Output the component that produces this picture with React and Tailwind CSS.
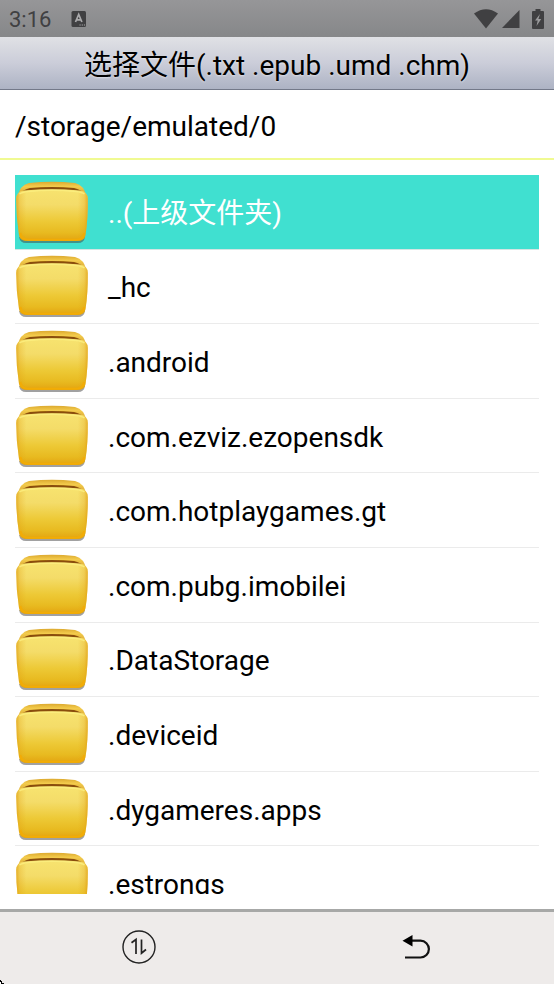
const FILES = [
  "..(上级文件夹)",
  "_hc",
  ".android",
  ".com.ezviz.ezopensdk",
  ".com.hotplaygames.gt",
  ".com.pubg.imobilei",
  ".DataStorage",
  ".deviceid",
  ".dygameres.apps",
  ".estrongs",
]

const FRONT = "M1.2 20 Q1.500 12.500 9 11.600 Q37 9 65 11.600 Q72.500 12.500 72.800 20 Q73 40 70.500 56 Q69.800 62 62 62 H12.500 Q4.800 62 4 56 Q1.200 38 1.200 20 Z"

function FolderIcon() {
  return (
    <svg className="w-[74px] h-[66px] shrink-0" viewBox="0 0 74 66" aria-hidden="true">
      <path d="M4 58 Q5 64 11 64 H63 Q69 64 70 58 Z" fill="#444" opacity=".5" filter="url(#folderBlur)" />
      <path d="M3 17 Q4.500 6.500 14 4 Q37 1.500 60 4 Q69.500 6.500 71 17 L69 26 H4 Z" fill="url(#folderBack)" />
      <path d="M5 15 Q8 10.500 15 9 Q37 6.800 59 9 Q66 10.500 69 15 L67 18 H7 Z" fill="#8a4d08" filter="url(#folderBlur)" />
      <path d={FRONT} fill="url(#folderFront)" />
      <path d={FRONT} fill="url(#folderEdge)" />
      <path d="M4.500 15 Q7 13 13 12.400 Q37 10.200 61 12.400 Q67 13 69.500 15" fill="none" stroke="#fbee80" strokeWidth="1.500" opacity=".85" />
      <path d="M5.300 54 Q6.500 60.700 13 60.700 H61.500 Q68 60.700 69.200 54" fill="none" stroke="#f2ac05" strokeWidth="2" />
    </svg>
  )
}

function FolderDefs() {
  return (
    <svg className="absolute w-0 h-0" aria-hidden="true">
      <defs>
        <linearGradient id="folderBack" x1="0" y1="0" x2="0" y2="1">
          <stop offset="0" stopColor="#dca92f" />
          <stop offset=".2" stopColor="#f3cb4c" />
          <stop offset="1" stopColor="#b87710" />
        </linearGradient>
        <linearGradient id="folderFront" x1="0" y1="0" x2="0" y2="1">
          <stop offset="0" stopColor="#f7e36f" />
          <stop offset=".3" stopColor="#f4dc69" />
          <stop offset=".62" stopColor="#edc936" />
          <stop offset=".84" stopColor="#e8ba20" />
          <stop offset="1" stopColor="#e3a310" />
        </linearGradient>
        <linearGradient id="folderEdge" x1="0" y1="0" x2="1" y2="0">
          <stop offset="0" stopColor="#e09a0c" stopOpacity=".7" />
          <stop offset=".05" stopColor="#e09a0c" stopOpacity=".25" />
          <stop offset=".14" stopColor="#e09a0c" stopOpacity="0" />
          <stop offset=".86" stopColor="#e09a0c" stopOpacity="0" />
          <stop offset=".95" stopColor="#e09a0c" stopOpacity=".25" />
          <stop offset="1" stopColor="#e09a0c" stopOpacity=".7" />
        </linearGradient>
        <filter id="folderBlur" x="-10%" y="-50%" width="120%" height="250%">
          <feGaussianBlur stdDeviation=".6" />
        </filter>
      </defs>
    </svg>
  )
}

function StatusBar() {
  return (
    <div className="h-[37px] shrink-0 flex items-center pl-[9px] pr-[10px] bg-linear-to-b from-[#969698] to-[#868789] text-[#404042]">
      <span className="pt-0.5 text-[22px]">3:16</span>
      <svg className="ml-5 w-4 h-4" viewBox="0 0 15 16" fill="none" aria-hidden="true">
        <rect width="14.500" height="16" rx="1.500" fill="#404042" />
        <path d="M4 11 L7.200 3.500 L10.400 11 M5 8.800 H9.400" stroke="#aaaaac" strokeWidth="1.700" />
        <path d="M8 14 H14" stroke="#aaaaac" strokeWidth="1.200" strokeDasharray="1.200 1" />
      </svg>
      <div className="ml-auto flex items-center">
        <svg className="w-6 h-5" viewBox="0 0 24 20" fill="currentColor" aria-hidden="true">
          <path d="M0 4.500 Q12-4 24 4.500 L12 19.500 Z" />
        </svg>
        <svg className="ml-1 w-[18px] h-[18px]" viewBox="0 0 18 18" fill="currentColor" aria-hidden="true">
          <path d="M17.500 0 V18 H0 Z" />
        </svg>
        <svg className="ml-3 w-3 h-5" viewBox="0 0 12 20" fill="currentColor" aria-hidden="true">
          <path d="M3.500 0 H8.500 V2 H11 Q12 2 12 3 V19 Q12 20 11 20 H1 Q0 20 0 19 V3 Q0 2 1 2 H3.500 Z" />
          <path d="M8 5 L3 11.500 H5.700 L4.500 17 L9.200 10 H6.400 Z" fill="#9b9b9d" />
        </svg>
      </div>
    </div>
  )
}

function FileRow({ name, selected }) {
  return (
    <li className={selected ? "bg-[#40e0d0] text-white border-b border-[#d5e5e3]" : "border-b border-[#ebebeb]"}>
      <button type="button" className="w-full h-full flex items-center text-left gap-[19px]">
        <FolderIcon />
        <span className="pt-1">{name}</span>
      </button>
    </li>
  )
}

export default function App() {
  return (
    <div className="relative h-screen flex flex-col overflow-hidden bg-white text-black text-[28px] leading-8 font-[Roboto,'Noto_Sans_CJK_SC',sans-serif]">
      <FolderDefs />
      <StatusBar />

      <header className="h-[53px] shrink-0 flex items-center justify-center bg-linear-to-b from-[#e0e1e5] via-[#cbcdd9] to-[#adb3c4] border-b border-[#737989]">
        <h1 className="pt-1.5 text-shadow-[0_1px_2px_#ffffff80]">选择文件(.txt .epub .umd .chm)</h1>
      </header>

      <p className="h-[70px] shrink-0 flex items-center px-[15px] pt-1.5 border-b-2 border-[#f0fa92]">
        /storage/emulated/0
      </p>

      <main className="flex-1 min-h-0 flex flex-col p-[15px]">
        <div className="flex-1 min-h-0 overflow-hidden">
          <ul className="h-[746px] grid auto-rows-fr">
            {FILES.map((name, idx) => (
              <FileRow key={name} name={name} selected={idx === 0} />
            ))}
          </ul>
        </div>
      </main>

      <footer className="h-[75px] shrink-0 grid grid-cols-2 pb-0.5 bg-[#eeebea] border-t-3 border-[#a7a8a7]">
        <button type="button" aria-label="排序" className="flex items-center justify-center">
          <svg className="w-[34px] h-[34px]" viewBox="0 0 34 34" fill="none" stroke="#222" aria-hidden="true">
            <circle cx="17" cy="17" r="16" strokeWidth="1.400" />
            <path d="M9.500 12.800 L14 9.500 V24" strokeWidth="1.700" />
            <path d="M19.500 9.500 V23.200 L24 19.500" strokeWidth="1.700" />
          </svg>
        </button>
        <button type="button" aria-label="返回" className="flex items-center justify-center">
          <svg className="w-7 h-6" viewBox="0 0 28 24" fill="none" stroke="#111" aria-hidden="true">
            <path d="M9 5.700 H18.500 A8.400 8.400 0 0 1 18.500 22.500 H3" strokeWidth="2.200" />
            <path d="M.5 5.700 L10.500 0 V11.500 Z" fill="#000" stroke="none" />
          </svg>
        </button>
      </footer>

      {/* tip of the pointer, parked in the corner */}
      <svg className="absolute left-0 bottom-0 w-1 h-1" viewBox="0 0 4 4" aria-hidden="true">
        <path d="M0 0 H1 V1 H2 V3 H4 V4 H0 Z" fill="#000" />
        <path d="M0 2 H1 V4 H0 Z" fill="#fff" />
      </svg>
    </div>
  )
}
